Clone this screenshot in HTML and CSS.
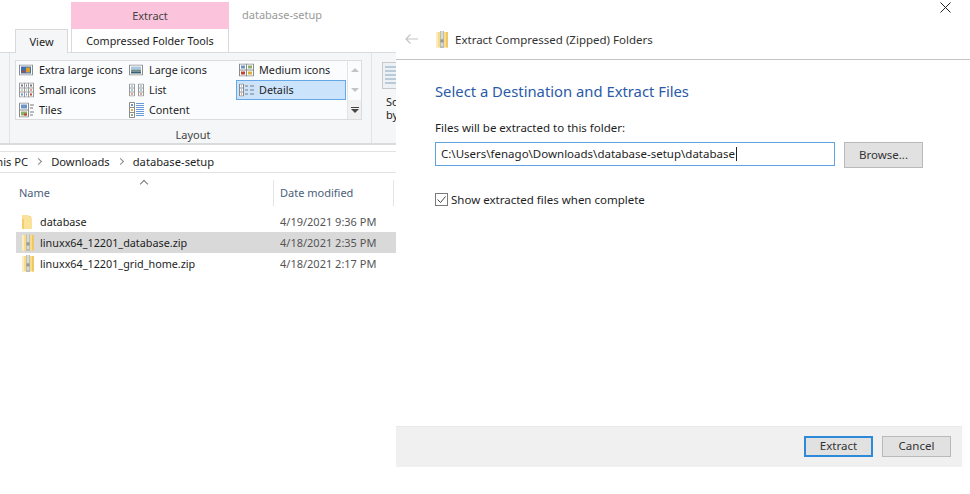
FILE: index.html
```html
<!DOCTYPE html>
<html lang="en">
<head>
    <meta charset="UTF-8">
    <meta name="viewport" content="width=device-width, initial-scale=1.0">
    <title>Extract Compressed (Zipped) Folders</title>
    <link rel="stylesheet" href="styles.css">
</head>
<body>
    <svg class="defs" width="0" height="0">
        <symbol id="zip" viewBox="0 0 12 17">
            <rect x="0" y="1" width="12" height="15.500" fill="#f8dc88"/>
            <rect x="0" y="1" width="2" height="15.500" fill="#fcedc0"/>
            <rect x="10" y="1" width="2" height="15.500" fill="#eec766"/>
            <rect x="4" y="0" width="4" height="17" fill="#bdbdb8"/>
            <path d="M5 1h2M5 3h2M5 5h2M5 7h2M5 12h2M5 14h2" stroke="#f5f5f3" fill="none"/>
            <rect x="4.500" y="8.500" width="3" height="3" fill="#97989a"/>
        </symbol>
    </svg>

    <div class="explorer">
        <div class="titlebar">
            <div class="tab-view">View</div>
            <div class="tool-tab">
                <div class="tool-head">Extract</div>
                <div class="tool-name">Compressed Folder Tools</div>
            </div>
            <div class="folder-title">database-setup</div>
        </div>

        <div class="ribbon">
            <div class="group">
                <div class="gallery">
                    <div class="items">
                        <div class="item">
                            <svg class="icon" width="14" height="11" viewBox="0 0 14 11"><rect x=".5" y=".5" width="13" height="10" fill="#fff" stroke="#8b8b8b"/><rect x="2" y="2" width="10" height="7" fill="#3f6fb5"/><rect x="7" y="3" width="4" height="5" fill="#d9a226"/><rect x="3" y="6" width="3" height="2" fill="#b8493a"/></svg>
                            <span>Extra large icons</span>
                        </div>
                        <div class="item">
                            <svg class="icon" width="14" height="11" viewBox="0 0 14 11"><rect x=".5" y=".5" width="13" height="10" fill="#fff" stroke="#8b8b8b"/><rect x="2" y="2" width="10" height="3" fill="#a9c9e4"/><rect x="2" y="5" width="10" height="2" fill="#6f8f8a"/><rect x="2" y="7" width="10" height="2" fill="#3b5f73"/></svg>
                            <span>Large icons</span>
                        </div>
                        <div class="item">
                            <svg class="icon" width="15" height="13" viewBox="0 0 15 13"><rect x=".5" y=".5" width="14" height="12" fill="#fff" stroke="#8b8b8b"/><path d="M7.500 0v13M0 6.500h15" stroke="#8b8b8b"/><rect x="2" y="2" width="4" height="3" fill="#6b93c9"/><rect x="9" y="2" width="4" height="3" fill="#8fae6a"/><rect x="2" y="8" width="4" height="3" fill="#c2452f"/><rect x="9" y="8" width="4" height="3" fill="#d9b13a"/></svg>
                            <span>Medium icons</span>
                        </div>
                        <div class="item">
                            <svg class="icon" width="15" height="15" viewBox="0 0 15 15"><rect x=".5" y=".5" width="14" height="14" fill="#fff" stroke="#9a9a9a"/><path d="M5.500 0v15M9.500 0v15M0 5.500h15M0 9.500h15" stroke="#9a9a9a"/><path d="M2 2h2v2H2zM7 2h1v2H7zM11 2h2v2h-2z" fill="#6b7a8c"/><path d="M2 7h2v1H2zM7 7h1v1H7z" fill="#8fae6a"/><path d="M11 7h2v1h-2z" fill="#c2452f"/><path d="M2 11h2v2H2zM7 11h1v2H7z" fill="#6b93c9"/><path d="M11 11h2v2h-2z" fill="#c2452f"/></svg>
                            <span>Small icons</span>
                        </div>
                        <div class="item">
                            <svg class="icon" width="15" height="13" viewBox="0 0 15 13"><path d="M.5.500h5v12h-5zM9.500.500h5v12h-5zM.5 4.500h5M.5 8.500h5M9.500 4.500h5M9.500 8.500h5" fill="#fff" stroke="#9a9a9a"/><path d="M2 2h2v1H2zM11 2h2v1h-2zM2 6h2v1H2zM11 6h2v1h-2z" fill="#6b93c9"/><path d="M2 10h2v1H2zM11 10h2v1h-2z" fill="#c2452f"/></svg>
                            <span>List</span>
                        </div>
                        <div class="item item-active">
                            <svg class="icon" width="15" height="13" viewBox="0 0 15 13"><path d="M.5.500h4v12h-4zM.5 4.500h4M.5 8.500h4" fill="#fff" stroke="#8b8b8b"/><path d="M2 2h1v1H2zM2 6h1v1H2z" fill="#6b93c9"/><path d="M2 10h1v1H2z" fill="#c2452f"/><path d="M6 2.500h3M11 2.500h4M6 6.500h3M11 6.500h4M6 10.500h3M11 10.500h4" stroke="#7b7b7b"/></svg>
                            <span>Details</span>
                        </div>
                        <div class="item">
                            <svg class="icon" width="15" height="15" viewBox="0 0 15 15"><path d="M.5.500h9v14h-9zM.5 7.500h9" fill="#fff" stroke="#8b8b8b"/><rect x="2" y="2" width="6" height="4" fill="#6b93c9"/><rect x="2" y="9" width="6" height="4" fill="#8fae6a"/><rect x="5" y="11" width="3" height="2" fill="#c2452f"/><path d="M11 2.500h4M11 5.500h3M11 9.500h4M11 12.500h3" stroke="#7b7b7b"/></svg>
                            <span>Tiles</span>
                        </div>
                        <div class="item">
                            <svg class="icon" width="15" height="16" viewBox="0 0 15 16"><path d="M.5.500h5v15h-5zM.5 5.500h5M.5 10.500h5" fill="#fff" stroke="#8b8b8b"/><path d="M2 2h2v2H2z" fill="#6b93c9"/><path d="M2 7h2v2H2z" fill="#d9b13a"/><path d="M2 12h2v2H2z" fill="#8fae6a"/><path d="M7 1.500h8M7 3.500h8M7 5.500h8M7 7.500h8M7 9.500h8M7 11.500h8M7 13.500h8" stroke="#6a9bd8"/></svg>
                            <span>Content</span>
                        </div>
                    </div>
                    <div class="spin">
                        <div class="spin-btn"><i class="arrow-up"></i></div>
                        <div class="spin-btn"><i class="arrow-down"></i></div>
                        <div class="spin-btn spin-more"><i class="more-line"></i><i class="arrow-dark"></i></div>
                    </div>
                </div>
                <div class="group-label">Layout</div>
            </div>
            <div class="next-group">
                <svg class="sort-icon" viewBox="0 0 28 27"><rect x=".5" y=".5" width="27" height="26" fill="#eef1f3" stroke="#c9c9c9"/><path d="M3 5h22M3 9h22M3 13h22M3 17h22M3 21h22" stroke="#b9cbd8" stroke-width="2"/></svg>
                <div class="next-text">Sort<br>by</div>
            </div>
        </div>

        <div class="address">
            <span class="crumb crumb-first">This PC</span>
            <i class="chevron"></i>
            <span class="crumb">Downloads</span>
            <i class="chevron"></i>
            <span class="crumb">database-setup</span>
        </div>

        <div class="list-head">
            <i class="sort-caret"></i>
            <div class="col-name">Name</div>
            <div class="col-date">Date modified</div>
        </div>

        <div class="rows">
            <div class="row">
                <svg class="folder" viewBox="0 0 10 14"><path d="M0 1h9v13H0z" fill="#f3cf6c"/><path d="M0 0h6l4 3v11H2V4H0z" fill="#fae29a"/></svg>
                <span class="row-name">database</span>
                <span class="row-date">4/19/2021 9:36 PM</span>
            </div>
            <div class="row row-selected">
                <svg class="zip"><use href="#zip"/></svg>
                <span class="row-name">linuxx64_12201_database.zip</span>
                <span class="row-date">4/18/2021 2:35 PM</span>
            </div>
            <div class="row">
                <svg class="zip"><use href="#zip"/></svg>
                <span class="row-name">linuxx64_12201_grid_home.zip</span>
                <span class="row-date">4/18/2021 2:17 PM</span>
            </div>
        </div>
    </div>

    <div class="dialog">
        <svg class="close" viewBox="0 0 11 11"><path d="M.5.500l10 10M10.500.500l-10 10" stroke="#222" fill="none"/></svg>
        <div class="dialog-top">
            <svg class="back" viewBox="0 0 13 10"><path d="M13 5H1M5.500.500L1 5l4.500 4.500" stroke="#c4c4c4" stroke-width="1.200" fill="none"/></svg>
            <svg class="zip"><use href="#zip"/></svg>
            <span class="dialog-title">Extract Compressed (Zipped) Folders</span>
        </div>
        <div class="dialog-body">
            <h1 class="heading">Select a Destination and Extract Files</h1>
            <label class="path-label" for="path">Files will be extracted to this folder:</label>
            <div class="path-row">
                <div class="path-input" id="path">C:\Users\fenago\Downloads\database-setup\database<i class="caret"></i></div>
                <button class="btn">Browse...</button>
            </div>
            <div class="check-row">
                <svg class="check" viewBox="0 0 13 13"><rect x=".5" y=".5" width="12" height="12" fill="#fff" stroke="#7a7a7a"/><path d="M2.500 6.500l3 3 5-6" stroke="#444" fill="none"/></svg>
                <span>Show extracted files when complete</span>
            </div>
        </div>
        <div class="dialog-foot">
            <button class="btn btn-default">Extract</button>
            <button class="btn">Cancel</button>
        </div>
    </div>
</body>
</html>
```

FILE: styles.css
```css
* {
    box-sizing: border-box;
}
html, body {
    margin: 0;
    height: 494px;
    overflow: hidden;
}
body {
    position: relative;
    background: #fff;
    font-family: "Noto Sans", Arial, sans-serif;
    font-size: 11.5px;
    color: #1e1e1e;
}
.defs {
    position: absolute;
}
.explorer {
    width: 396px;
    display: flex;
    flex-direction: column;
    overflow: hidden;
    font-size: 11px;
}

/* title bar and tabs */
.titlebar {
    height: 52px;
    padding: 2px 0 0 15px;
    display: flex;
    align-items: flex-start;
}
.tab-view {
    position: relative;
    z-index: 1;
    width: 53px;
    height: 24px;
    margin-top: 27px;
    line-height: 23px;
    text-align: center;
    background: #f5f6f7;
    border: 1px solid #d9d9d9;
    border-bottom: none;
}
.tool-tab {
    width: 158px;
    margin-left: 3px;
}
.tool-head {
    height: 27px;
    line-height: 27px;
    text-align: center;
    background: #fcc4dc;
    color: #444;
}
.tool-name {
    height: 23px;
    line-height: 23px;
    text-align: center;
    font-size: 10.800px;
    border: 1px solid #d9d9d9;
    border-top: none;
    border-bottom: none;
}
.folder-title {
    margin: 5px 0 0 13px;
    color: #9a9a9a;
}

/* ribbon */
.ribbon {
    height: 93px;
    display: flex;
    background: #f5f6f7;
    border-top: 1px solid #dadbdc;
    border-bottom: 2px solid #dadbdc;
}
.group {
    flex-shrink: 0;
    width: 363px;
    margin: 0 0 0 9px;
    padding: 7px 0 0 5px;
    border-left: 1px solid #e2e3e4;
    border-right: 1px solid #e2e3e4;
}
.gallery {
    width: 347px;
    height: 60px;
    display: flex;
    background: #fbfcfe;
    border: 1px solid #dcdcdc;
}
.items {
    flex-shrink: 0;
    width: 331px;
    margin-top: -1px;
    display: grid;
    grid-template-columns: 110px 110px 110px;
    grid-template-rows: repeat(3, 20px);
}
.item {
    display: flex;
    align-items: center;
    position: relative;
    padding: 0 0 2px 23px;
    font-size: 10.800px;
    white-space: nowrap;
}
.item .icon {
    position: absolute;
    left: 3px;
    top: 50%;
    transform: translateY(-50%);
}
.item-active {
    background: #cce4fb;
    outline: 1px solid #66a7e8;
    outline-offset: -1px;
}
.spin {
    flex: 1;
    margin-top: -1px;
    display: flex;
    flex-direction: column;
    border-left: 1px solid #e4e4e4;
}
.spin-btn {
    height: 20px;
    display: flex;
    flex-direction: column;
    align-items: center;
    justify-content: center;
}
.spin-more {
    height: 19px;
    background: #f0f0f0;
    gap: 1px;
}
.arrow-up, .arrow-down, .arrow-dark {
    width: 0;
    height: 0;
    border-left: 4px solid transparent;
    border-right: 4px solid transparent;
}
.arrow-up {
    border-bottom: 4px solid #c4c4c4;
}
.arrow-down {
    border-top: 4px solid #c4c4c4;
}
.arrow-dark {
    border-top: 4px solid #444;
}
.more-line {
    width: 8px;
    height: 1px;
    background: #444;
}
.group-label {
    margin-top: 7px;
    text-align: center;
    color: #444;
}
.next-group {
    flex-shrink: 0;
    padding: 9px 0 0 10px;
    white-space: nowrap;
}
.sort-icon {
    display: block;
    width: 28px;
    height: 27px;
}
.next-text {
    margin-top: 6px;
    padding-left: 4px;
    line-height: 13px;
}

/* address bar */
.address {
    height: 22px;
    margin-top: 6px;
    padding-bottom: 2px;
    display: flex;
    align-items: center;
    font-size: 11.200px;
    border-top: 1px solid #e2e2e2;
    border-bottom: 1px solid #e2e2e2;
    white-space: nowrap;
}
.crumb-first {
    margin-left: -10px;
}
.chevron {
    width: 5px;
    height: 5px;
    margin: 0 10px 0 8px;
    border-top: 1px solid #888;
    border-right: 1px solid #888;
    transform: rotate(45deg);
}

/* file list */
.list-head {
    height: 33px;
    position: relative;
    display: flex;
    align-items: flex-end;
    color: #4c607a;
}
.col-name {
    width: 255px;
    margin-left: 19px;
    height: 26px;
    line-height: 26px;
    border-right: 1px solid #e5e5e5;
}
.col-date {
    width: 120px;
    padding-left: 6px;
    height: 26px;
    line-height: 26px;
    border-right: 1px solid #e5e5e5;
}
.sort-caret {
    position: absolute;
    left: 141px;
    top: 8px;
    width: 6px;
    height: 6px;
    border-top: 1px solid #777;
    border-left: 1px solid #777;
    transform: rotate(45deg);
}
.rows {
    margin-top: 5px;
}
.row {
    height: 21px;
    display: flex;
    align-items: center;
    margin-left: 16px;
    padding-left: 6px;
    white-space: nowrap;
}
.row-selected {
    background: #d9d9d9;
}
.folder {
    width: 10px;
    height: 14px;
    margin-right: 8px;
}
.row .zip {
    width: 12px;
    height: 17px;
    margin: 0 6px 0 0;
}
.row-name {
    width: 240px;
    font-size: 10.800px;
}
.row-date {
    color: #555;
}

/* extract dialog, sits over the explorer window */
.dialog {
    position: absolute;
    left: 396px;
    top: 0;
    width: 574px;
    height: 467px;
    display: flex;
    flex-direction: column;
    background: #fff;
}
.close {
    position: absolute;
    right: 19px;
    top: 2px;
    width: 11px;
    height: 11px;
}
.dialog-top {
    height: 60px;
    padding: 19px 0 0 9px;
    display: flex;
    align-items: center;
    border-bottom: 1px solid #c4c4c4;
}
.back {
    width: 13px;
    height: 10px;
    margin-right: 18px;
}
.dialog-top .zip {
    width: 12px;
    height: 17px;
    margin-right: 7px;
}
.dialog-title {
    color: #333;
}
.dialog-body {
    flex: 1;
    padding: 0 0 0 39px;
}
.heading {
    margin: 20px 0 0;
    font-size: 14.800px;
    font-weight: normal;
    line-height: 22px;
    color: #2a5aa8;
}
.path-label {
    display: block;
    margin-top: 18px;
    line-height: 16px;
}
.path-row {
    display: flex;
    align-items: flex-start;
    margin-top: 6px;
}
.path-input {
    width: 400px;
    height: 24px;
    line-height: 22px;
    padding-left: 5px;
    border: 1px solid #5fa4e0;
    white-space: nowrap;
}
.caret {
    display: inline-block;
    width: 1px;
    height: 14px;
    margin-left: 1px;
    vertical-align: -3px;
    background: #222;
}
.btn {
    width: 79px;
    height: 26px;
    margin-left: 9px;
    padding: 0 0 2px;
    font: inherit;
    color: #333;
    background: #e1e1e1;
    border: 1px solid #b9b9b9;
}
.check-row {
    display: flex;
    align-items: center;
    margin-top: 24px;
}
.check {
    width: 13px;
    height: 13px;
    margin-right: 3px;
}
.dialog-foot {
    height: 41px;
    margin-right: 8px;
    display: flex;
    align-items: flex-start;
    justify-content: flex-end;
    padding: 9px 11px 0 0;
    background: #f0f0f0;
    border-top: 1px solid #e8e8e8;
}
.dialog-foot .btn {
    width: 69px;
    height: 21px;
}
.btn-default {
    border: 2px solid #2c8ad8;
}
```
